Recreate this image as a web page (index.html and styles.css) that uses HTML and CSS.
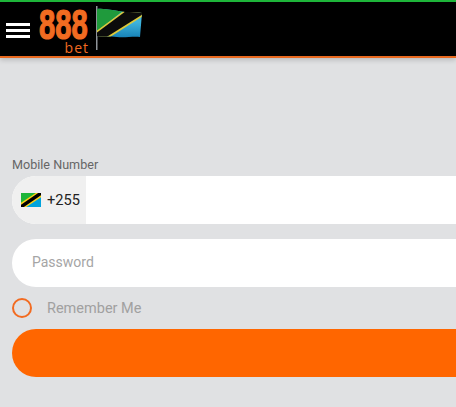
FILE: index.html
```html
<!DOCTYPE html>
<html>
    <head>
        <title>888bet</title>
        <link rel="stylesheet" href="styles.css">
    </head>
    <body>
        <div class="header">
            <div class="burger">
                <span></span>
                <span></span>
                <span></span>
            </div>
            <div class="logo">
                <div class="logo-num">888</div>
                <div class="logo-bet">bet</div>
            </div>
            <svg class="waving-flag" width="48" height="46" viewBox="0 0 48 46">
                <defs>
                    <clipPath id="wave">
                        <path d="M2 3 C10 2 20 5 30 6 C36 6 42 6 47 7 L45 31 C38 30 30 32 22 31 C14 30 8 31 2 30 Z"/>
                    </clipPath>
                    <linearGradient id="water" x1="0" y1="0" x2="0" y2="1">
                        <stop offset="0.35" stop-color="#3fb4dc"/>
                        <stop offset="0.7" stop-color="#157fb5"/>
                    </linearGradient>
                </defs>
                <rect x="1" y="0" width="1.5" height="44" fill="#8f9499"/>
                <g clip-path="url(#wave)">
                    <rect width="48" height="46" fill="url(#water)"/>
                    <polygon points="0,0 34,0 0,27" fill="#1f9a3c"/>
                    <polygon points="0,26 30,4 48,4 48,10 12,33 0,33" fill="#dcc93a"/>
                    <polygon points="0,28 31,5 48,5 48,8 10,32 0,32" fill="#0b0b0b"/>
                </g>
            </svg>
        </div>

        <form class="login" onsubmit="return false;">
            <label class="field-label">Mobile Number</label>
            <div class="field phone">
                <div class="prefix">
                    <svg class="small-flag" width="20" height="14" viewBox="0 0 21 15" preserveAspectRatio="none">
                        <rect width="21" height="15" fill="#1eb53a"/>
                        <polygon points="21,0 21,15 0,15" fill="#00a3dd"/>
                        <polygon points="0,15 0,10.5 15.5,0 21,0 21,4.5 5.5,15" fill="#fcd116"/>
                        <polygon points="0,15 0,12.5 18,0 21,0 21,2.5 3,15" fill="#000"/>
                    </svg>
                    <span class="code">+255</span>
                </div>
            </div>
            <div class="field password">
                <span class="placeholder">Password</span>
            </div>
            <div class="remember">
                <span class="radio"></span>
                <span class="remember-text">Remember Me</span>
            </div>
            <button class="submit" type="submit"></button>
        </form>
    </body>
</html>
```

FILE: styles.css
```css
html, body {
  margin: 0;
  height: 407px;
  overflow: hidden;
}

body {
  background-color: #e0e1e3;
  font-family: Roboto, Arial, sans-serif;
}

/* Top bar */
.header {
  display: flex;
  align-items: flex-start;
  height: 54px;
  background-color: #000;
  border-top: 2px solid #1eb53a;
  border-bottom: 2px solid #e8691f;
  box-shadow: 0 2px 5px rgba(0, 0, 0, 0.18);
}

.burger {
  display: flex;
  flex-direction: column;
  gap: 3px;
  width: 24px;
  margin: 21px 0 0 6px;
}

.burger span {
  height: 3px;
  background-color: #fff;
}

.logo {
  display: flex;
  flex-direction: column;
  align-items: flex-end;
  width: 50px;
  margin: 6px 0 0 9px;
  color: #f26b21;
}

.logo-num {
  align-self: flex-start;
  height: 32px;
  font-family: "Liberation Sans", sans-serif;
  font-size: 43px;
  font-weight: bold;
  line-height: 32px;
  white-space: nowrap;
  -webkit-text-stroke: 1.2px #f26b21;
  transform: scaleX(0.68);
  transform-origin: left center;
}

.logo-bet {
  margin-top: 2px;
  font-family: "Open Sans", sans-serif;
  font-size: 14px;
  line-height: 11px;
  letter-spacing: 1px;
}

.waving-flag {
  margin: 4px 0 0 6px;
}

/* Form */
.login {
  display: flex;
  flex-direction: column;
  width: 480px;
  margin: 98px 0 0 12px;
}

.field-label {
  height: 20px;
  color: #666;
  font-size: 12.6px;
  line-height: 17px;
}

.field {
  display: flex;
  align-items: center;
  height: 48px;
  border-radius: 24px;
  background-color: #fff;
  overflow: hidden;
}

.prefix {
  display: flex;
  align-items: center;
  gap: 6px;
  width: 65px;
  height: 100%;
  padding-left: 9px;
  background-color: #f0f0f0;
}

.code {
  color: #222;
  font-size: 14.6px;
}

.password {
  margin-top: 15px;
  padding-left: 20px;
}

.placeholder {
  position: relative;
  top: -1px;
  color: #a5a5a5;
  font-size: 14px;
}

.remember {
  display: flex;
  align-items: center;
  gap: 15px;
  height: 42px;
}

.radio {
  box-sizing: border-box;
  width: 20px;
  height: 20px;
  border: 2px solid #f26b21;
  border-radius: 50%;
}

.remember-text {
  color: #a0a0a0;
  font-size: 14.5px;
}

.submit {
  height: 48px;
  border: none;
  border-radius: 24px;
  background-color: #ff6600;
}
```
